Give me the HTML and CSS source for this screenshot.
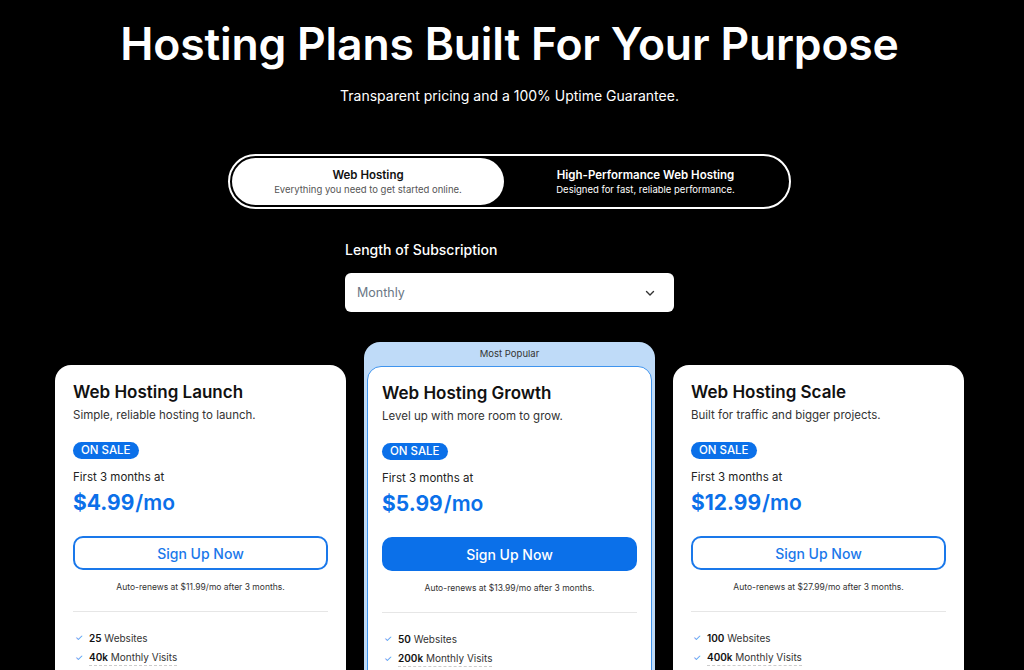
FILE: index.html
```html
<!DOCTYPE html>
<html lang="en">
<head>
    <meta charset="UTF-8">
    <meta name="viewport" content="width=device-width, initial-scale=1.0">
    <title>Hosting Plans</title>
    <link rel="stylesheet" href="styles.css">
</head>
<body>
    <div class="page">
        <div class="hero">
            <h1>Hosting Plans Built For Your Purpose</h1>
            <p>Transparent pricing and a 100% Uptime Guarantee.</p>
        </div>

        <!-- Plan type toggle -->
        <div class="toggle">
            <div class="toggle-option active">
                <div class="toggle-title">Web Hosting</div>
                <div class="toggle-sub">Everything you need to get started online.</div>
            </div>
            <div class="toggle-option">
                <div class="toggle-title">High-Performance Web Hosting</div>
                <div class="toggle-sub">Designed for fast, reliable performance.</div>
            </div>
        </div>

        <!-- Subscription length -->
        <div class="length">
            <label class="length-label">Length of Subscription</label>
            <div class="select">
                <span>Monthly</span>
                <svg width="12" height="12" viewBox="0 0 12 12" fill="none">
                    <path d="M2.5 4.5 L6 8 L9.5 4.5" stroke="#333" stroke-width="1.4" stroke-linecap="round" stroke-linejoin="round"/>
                </svg>
            </div>
        </div>

        <!-- Plans -->
        <div class="plans">
            <div class="card side">
                <h2>Web Hosting Launch</h2>
                <div class="card-sub">Simple, reliable hosting to launch.</div>
                <span class="badge">ON SALE</span>
                <div class="intro">First 3 months at</div>
                <div class="price">$4.99<span class="per">/mo</span></div>
                <button class="btn">Sign Up Now</button>
                <div class="renew">Auto-renews at $11.99/mo after 3 months.</div>
                <ul class="features">
                    <li><span class="check">&#10003;</span><span class="feat"><b>25</b> Websites</span></li>
                    <li><span class="check">&#10003;</span><span class="feat dotted"><b>40k</b> Monthly Visits</span></li>
                </ul>
            </div>

            <div class="popular">
                <div class="popular-band">Most Popular</div>
                <div class="card">
                    <h2>Web Hosting Growth</h2>
                    <div class="card-sub">Level up with more room to grow.</div>
                    <span class="badge">ON SALE</span>
                    <div class="intro">First 3 months at</div>
                    <div class="price">$5.99<span class="per">/mo</span></div>
                    <button class="btn solid">Sign Up Now</button>
                    <div class="renew">Auto-renews at $13.99/mo after 3 months.</div>
                    <ul class="features">
                        <li><span class="check">&#10003;</span><span class="feat"><b>50</b> Websites</span></li>
                        <li><span class="check">&#10003;</span><span class="feat dotted"><b>200k</b> Monthly Visits</span></li>
                    </ul>
                </div>
            </div>

            <div class="card side">
                <h2>Web Hosting Scale</h2>
                <div class="card-sub">Built for traffic and bigger projects.</div>
                <span class="badge">ON SALE</span>
                <div class="intro">First 3 months at</div>
                <div class="price">$12.99<span class="per">/mo</span></div>
                <button class="btn">Sign Up Now</button>
                <div class="renew">Auto-renews at $27.99/mo after 3 months.</div>
                <ul class="features">
                    <li><span class="check">&#10003;</span><span class="feat"><b>100</b> Websites</span></li>
                    <li><span class="check">&#10003;</span><span class="feat dotted"><b>400k</b> Monthly Visits</span></li>
                </ul>
            </div>
        </div>
    </div>
</body>
</html>
```

FILE: styles.css
```css
html, body {
    overflow: hidden;
}

body {
    background-color: #000;
    color: #fff;
    font-family: Inter, "Open Sans", Arial, sans-serif;
    margin: 0;
}

.page {
    padding: 18px 5px 40px 0;
    display: flex;
    flex-direction: column;
    align-items: center;
}

.hero {
    text-align: center;
}

.hero h1 {
    margin: 0;
    font-size: 44.5px;
    line-height: 52px;
    font-weight: 600;
    letter-spacing: -0.2px;
}

.hero p {
    margin: 16px 0 0;
    font-size: 14px;
    line-height: 20px;
}

.toggle {
    margin-top: 48px;
    width: 563px;
    box-sizing: border-box;
    border: 2px solid #fff;
    border-radius: 30px;
    padding: 2px;
    display: grid;
    grid-template-columns: 272px 1fr;
}

.toggle-option {
    height: 47px;
    border-radius: 24px;
    display: flex;
    flex-direction: column;
    justify-content: center;
    align-items: center;
    gap: 2px;
}

.toggle-option.active {
    background-color: #fff;
    color: #111;
}

.toggle-title {
    font-size: 11.5px;
    font-weight: 600;
}

.toggle-sub {
    font-size: 9.5px;
    color: #555;
}

.toggle-option:not(.active) .toggle-sub {
    color: #fff;
}

.length {
    margin-top: 31px;
    width: 329px;
}

.length-label {
    display: block;
    font-size: 14px;
    line-height: 20px;
    font-weight: 500;
}

.select {
    margin-top: 13px;
    height: 39px;
    background-color: #fff;
    border-radius: 6px;
    display: flex;
    align-items: center;
    justify-content: space-between;
    padding: 0 18px 0 12px;
    color: #6b7785;
    font-size: 12.5px;
}

.plans {
    margin-top: 30px;
    display: grid;
    grid-template-columns: repeat(3, 291px);
    gap: 18px;
    align-items: start;
}

.card {
    background-color: #fff;
    color: #111;
    border-radius: 16px;
    padding: 15px 18px 20px;
    box-sizing: border-box;
}

.card.side {
    margin-top: 23px;
}

.popular {
    background-color: #bfdbf8;
    border-radius: 16px;
    padding: 0 3px 3px;
}

.popular-band {
    height: 24px;
    line-height: 24px;
    text-align: center;
    font-size: 9.5px;
    color: #333;
}

.popular .card {
    border: 1px solid #3f94ee;
    border-radius: 14px;
    padding: 14px 14px 20px;
}

.card h2 {
    margin: 0;
    font-size: 17px;
    line-height: 24px;
    font-weight: 600;
}

.card-sub {
    margin-top: 2px;
    font-size: 11.5px;
    line-height: 18px;
    color: #333;
}

.badge {
    display: inline-block;
    margin-top: 18px;
    background-color: #0b70e9;
    color: #fff;
    font-size: 11.5px;
    font-weight: 500;
    line-height: 17px;
    padding: 0 8px;
    border-radius: 10px;
}

.intro {
    margin-top: 9px;
    font-size: 11.5px;
    line-height: 18px;
    color: #222;
}

.price {
    margin-top: 2px;
    color: #0b70e9;
    font-size: 21px;
    line-height: 30px;
    font-weight: 700;
}

.per {
    font-weight: 600;
    margin-left: 1px;
}

.btn {
    display: block;
    width: 100%;
    margin-top: 18px;
    height: 34px;
    border: 2px solid #1a78ea;
    border-radius: 10px;
    background-color: #fff;
    color: #1a78ea;
    font-family: inherit;
    font-size: 14px;
    font-weight: 500;
    cursor: pointer;
}

.btn.solid {
    background-color: #0b70e9;
    border-color: #0b70e9;
    color: #fff;
}

.renew {
    margin-top: 10px;
    font-size: 8.5px;
    line-height: 14px;
    text-align: center;
    color: #333;
    padding-bottom: 17px;
    border-bottom: 1px solid #e6e6e6;
}

.features {
    list-style: none;
    margin: 16px 0 0;
    padding: 0 0 0 2px;
}

.features li {
    display: flex;
    align-items: center;
    gap: 6px;
    font-size: 10px;
    line-height: 20px;
    color: #333;
}

.check {
    color: #3b8ef0;
    font-size: 9px;
}

.feat b {
    color: #111;
    font-weight: 600;
}

.feat.dotted {
    border-bottom: 1px dashed #ccc;
    line-height: 15px;
}
```
